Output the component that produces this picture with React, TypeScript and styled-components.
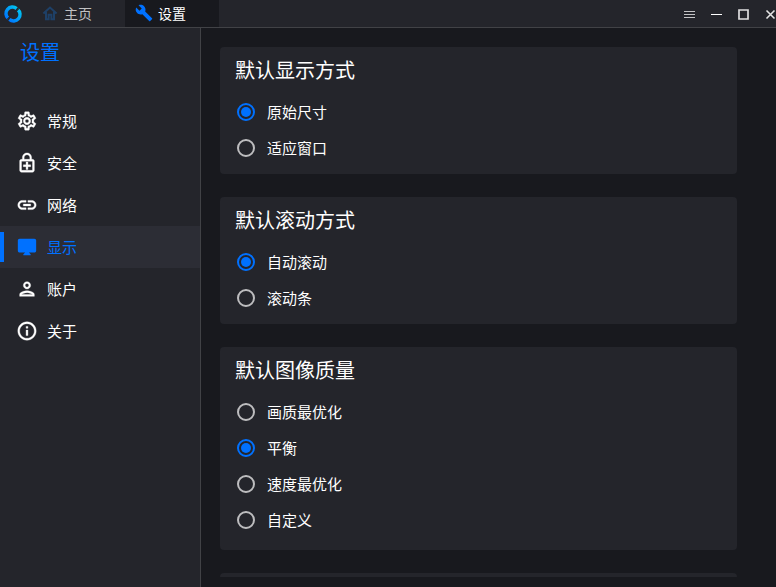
import React, { useState } from 'react';
import styled, { createGlobalStyle, css } from 'styled-components';
import type { IconType } from 'react-icons';
import {
  MdBuild,
  MdDesktopMac,
  MdLink,
  MdOutlineEnhancedEncryption,
  MdOutlineInfo,
  MdOutlinePerson,
  MdOutlineSettings,
} from 'react-icons/md';

const color = {
  panel: '#24252b',
  page: '#18191e',
  active: '#2c2d35',
  line: '#414246',
  accent: '#0071ff',
  text: '#ffffff',
  muted: '#c0c0c2',
};

const GlobalStyle = createGlobalStyle`
  *, *::before, *::after { box-sizing: border-box; }
  body {
    margin: 0;
    background: ${color.page};
    color: ${color.text};
    font-family: "Noto Sans CJK SC", "Liberation Sans", sans-serif;
    font-size: 15px;
    line-height: 20px;
  }
  button { font: inherit; color: inherit; border: 0; padding: 0; background: none; cursor: pointer; }
`;

const Window = styled.div`
  display: flex;
  flex-direction: column;
  height: 100vh;
  overflow: hidden;
`;

const TitleBar = styled.header`
  display: flex;
  flex: none;
  height: 28px;
  background: ${color.panel};
  border-bottom: 1px solid ${color.line};
`;

const Brand = styled.div`
  display: flex;
  align-items: center;
  width: 31px;
  padding-left: 4px;
`;

const TabList = styled.nav`
  display: flex;
  flex: 1;
`;

const Tab = styled.button<{ $active?: boolean }>`
  display: flex;
  align-items: center;
  gap: 5px;
  width: 94px;
  padding-left: 10px;
  padding-bottom: 1px;
  font-size: 14px;
  line-height: 18px;
  color: ${(p) => (p.$active ? color.text : color.muted)};
  background: ${(p) => (p.$active ? color.page : 'transparent')};
`;

const WindowButtons = styled.div`
  display: flex;
`;

const WindowButton = styled.button`
  display: grid;
  place-items: center;
  flex: none;
  width: 27px;
  padding-top: 2px;

  &:last-child { width: 19px; padding-left: 8px; }
`;

const Body = styled.div`
  display: flex;
  flex: 1;
  min-height: 0;
`;

const Sidebar = styled.aside`
  flex: none;
  width: 201px;
  background: ${color.panel};
  border-right: 1px solid ${color.line};
`;

const SidebarTitle = styled.h1`
  height: 72px;
  margin: 0;
  padding: 9px 0 0 20px;
  font-size: 20px;
  font-weight: 400;
  line-height: 30px;
  color: ${color.accent};
`;

const MenuItem = styled.button<{ $active: boolean }>`
  display: flex;
  align-items: center;
  width: 100%;
  height: 42px;
  text-align: left;

  &::before {
    content: '';
    width: 4px;
    height: 30px;
    margin-right: 12px;
  }

  svg { margin-right: 9px; }
  svg path { stroke-width: 0.4; }
  svg [fill='none'] { stroke: none; }

  ${(p) =>
    p.$active &&
    css`
      color: ${color.accent};
      background: ${color.active};
      &::before { background: ${color.accent}; }
      svg path { stroke: none; }
    `}
`;

const Content = styled.main`
  display: flex;
  flex: 1;
  flex-direction: column;
  gap: 23px;
  margin: 19px 39px 10px 19px;
  overflow: hidden;
`;

const Card = styled.fieldset<{ $tall: boolean }>`
  flex: none;
  min-width: 0;
  margin: 0;
  padding: 0 15px ${(p) => (p.$tall ? 12 : 8)}px;
  border: 0;
  border-radius: 4px;
  background: ${color.panel};
`;

const CardTitle = styled.legend`
  float: left;
  width: 100%;
  height: 47px;
  padding: 0;
  font-size: 20px;
  line-height: 46px;
`;

const NextCard = styled.div`
  flex: 1;
  border-radius: 4px 4px 0 0;
  background: ${color.panel};
`;

const Option = styled.label`
  display: flex;
  clear: both;
  align-items: center;
  gap: 12px;
  height: 36px;
  padding-left: 2px;
  cursor: pointer;
`;

const Radio = styled.input`
  display: grid;
  place-items: center;
  flex: none;
  width: 18px;
  height: 18px;
  margin: 0;
  appearance: none;
  border: 2px solid #bdbdbf;
  border-radius: 50%;

  &:checked { border-color: ${color.accent}; }
  &:checked::before {
    content: '';
    width: 10px;
    height: 10px;
    border-radius: 50%;
    background: ${color.accent};
  }
`;

const Logo = () => (
  <svg width="18" height="18" viewBox="0 0 18 18" fill="none" aria-hidden="true">
    <defs>
      <linearGradient id="logo" x1="3" y1="15" x2="15" y2="3" gradientUnits="userSpaceOnUse">
        <stop stopColor="#0071ff" />
        <stop offset="1" stopColor="#00c8f0" />
      </linearGradient>
    </defs>
    <path
      d="M4.2 13.4A6.4 6.4 0 0 1 12.6 3.6M13.8 4.6A6.4 6.4 0 0 1 5.4 14.4"
      stroke="url(#logo)"
      strokeWidth="3.4"
    />
    <path d="m2.6 14.8 3.2-3.4M15.4 3.2l-3.2 3.4" stroke={color.panel} strokeWidth="1" />
  </svg>
);

const HomeIcon = () => (
  <svg width="18" height="18" viewBox="0 0 18 18" fill="none" stroke="#1e4067" strokeWidth="2" aria-hidden="true">
    <path d="M2.4 9.6 9 3.6l6.6 6M5 8v7.2h2.6v-4.4h2.8v4.4H13V8" />
  </svg>
);

const Glyph = ({ d, weight, tone }: { d: string; weight: number; tone: string }) => (
  <svg width="11" height="11" viewBox="0 0 11 11" fill="none" stroke={tone} strokeWidth={weight} aria-hidden="true">
    <path d={d} />
  </svg>
);

const windowActions = [
  { label: '菜单', d: 'M0 2.5h11M0 5.5h11M0 8.5h11', weight: 1, tone: '#c4c4c6' },
  { label: '最小化', d: 'M0 5.5h11', weight: 1, tone: '#ffffff' },
  { label: '最大化', d: 'M1 1h9v9H1z', weight: 1.7, tone: '#dedee0' },
  { label: '关闭', d: 'M1.5 1.5l8 8M9.5 1.5l-8 8', weight: 1.6, tone: '#e4e4e5' },
];

const menu: { label: string; Icon: IconType }[] = [
  { label: '常规', Icon: MdOutlineSettings },
  { label: '安全', Icon: MdOutlineEnhancedEncryption },
  { label: '网络', Icon: MdLink },
  { label: '显示', Icon: MdDesktopMac },
  { label: '账户', Icon: MdOutlinePerson },
  { label: '关于', Icon: MdOutlineInfo },
];

const groups = [
  { name: 'view', title: '默认显示方式', options: ['原始尺寸', '适应窗口'], initial: '原始尺寸' },
  { name: 'scroll', title: '默认滚动方式', options: ['自动滚动', '滚动条'], initial: '自动滚动' },
  {
    name: 'quality',
    title: '默认图像质量',
    options: ['画质最优化', '平衡', '速度最优化', '自定义'],
    initial: '平衡',
  },
];

export default function App() {
  const [section, setSection] = useState('显示');
  return (
    <>
      <GlobalStyle />
      <Window>
        <TitleBar>
          <Brand><Logo /></Brand>
          <TabList>
            <Tab type="button"><HomeIcon />主页</Tab>
            <Tab type="button" $active><MdBuild size={18} color={color.accent} />设置</Tab>
          </TabList>
          <WindowButtons>
            {windowActions.map((a) => (
              <WindowButton key={a.label} type="button" aria-label={a.label}>
                <Glyph d={a.d} weight={a.weight} tone={a.tone} />
              </WindowButton>
            ))}
          </WindowButtons>
        </TitleBar>
        <Body>
          <Sidebar>
            <SidebarTitle>设置</SidebarTitle>
            {menu.map(({ label, Icon }) => (
              <MenuItem key={label} type="button" $active={section === label} onClick={() => setSection(label)}>
                <Icon size={22} />
                {label}
              </MenuItem>
            ))}
          </Sidebar>
          <Content>
            {groups.map((g) => (
              <Card key={g.name} $tall={g.options.length > 2}>
                <CardTitle>{g.title}</CardTitle>
                {g.options.map((o) => (
                  <Option key={o}>
                    <Radio type="radio" name={g.name} defaultChecked={o === g.initial} />
                    {o}
                  </Option>
                ))}
              </Card>
            ))}
            <NextCard />
          </Content>
        </Body>
      </Window>
    </>
  );
}
